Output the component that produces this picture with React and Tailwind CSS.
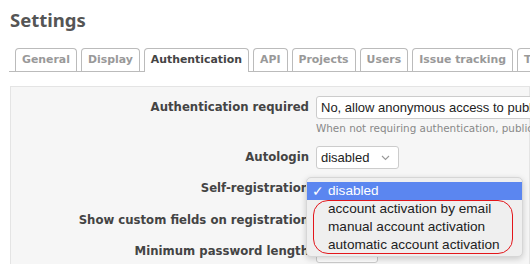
const tabs = ["General", "Display", "Authentication", "API", "Projects", "Users", "Issue tracking", "Time tracking"];

const verdana = { fontFamily: '"DejaVu Sans", Verdana, sans-serif' };

function Row({ label, children, className = "" }) {
  return (
    <div className={"flex items-center h-[23px] " + className}>
      <label className="w-[298px] shrink-0 text-right font-bold text-[11.7px] text-[#444] whitespace-nowrap overflow-hidden">
        {label}
      </label>
      <div className="ml-[7px] flex items-center">{children}</div>
    </div>
  );
}

function Select({ value, width, chevron }) {
  return (
    <div
      className="h-[23px] bg-white border border-[#ccc] rounded-[3px] flex items-center pl-[4px] pr-[8px] text-[13px] text-[#222] whitespace-nowrap"
      style={{ fontFamily: '"Liberation Sans", Arial, sans-serif', width }}
    >
      <span>{value}</span>
      {chevron && (
        <svg className="ml-auto" width="9" height="6" viewBox="0 0 9 6">
          <path d="M1 1l3.5 3.5L8 1" fill="none" stroke="#999" strokeWidth="1.1" />
        </svg>
      )}
    </div>
  );
}

export default function App() {
  return (
    <div className="w-[530px] h-[264px] overflow-hidden bg-white relative" style={verdana}>
      <h2
        className="pl-[10px] pt-[8px] text-[18.5px] font-bold text-[#555] leading-[24px]"
        style={{ fontFamily: '"Noto Sans", "Open Sans", sans-serif' }}
      >
        Settings
      </h2>

      <div className="ml-[9px] mt-[17px] border-b border-[#bbb] flex gap-[4px] pl-[6px] h-[23px] items-end whitespace-nowrap">
        {tabs.map((t) => {
          const active = t === "Authentication";
          return (
            <div
              key={t}
              className={
                "px-[6px] flex items-center shrink-0 border border-b-0 rounded-t-[4px] text-[10.9px] font-bold border-[#bbb] " +
                (active ? "bg-white text-[#444] h-[24px] -mb-px" : "h-[23px] bg-white text-[#999]")
              }
            >
              {t}
            </div>
          );
        })}
      </div>

      <div className="ml-[10px] mt-[14px] bg-[#f6f6f6] border border-[#e4e4e4] pt-[9px] h-[200px]">
        <Row label="Authentication required">
          <Select value="No, allow anonymous access to public projects" width={260} />
        </Row>
        <p className="pl-[305px] mt-[2px] text-[10.4px] leading-[14px] text-[#888] whitespace-nowrap">
          When not requiring authentication, public projects and their contents are openly available
        </p>
        <Row label="Autologin" className="mt-[11px]">
          <Select value="disabled" width={83} chevron />
        </Row>
        <Row label="Self-registration" className="mt-[8px]">
          <Select value="disabled" width={83} chevron />
        </Row>
        <Row label="Show custom fields on registration" className="mt-[9px]">
          <input type="checkbox" className="ml-[2px]" />
        </Row>
        <Row label="Minimum password length" className="mt-[8px]">
          <div
            className="w-[62px] h-[23px] bg-white border border-[#ccc] rounded-[3px] pl-[4px] text-[13px] flex items-center"
            style={{ fontFamily: '"Liberation Sans", Arial, sans-serif' }}
          >
            8
          </div>
        </Row>
      </div>

      {/* native select popup */}
      <div
        className="absolute left-[306px] top-[177px] w-[217px] h-[80px] rounded-[5px] bg-[#efefef] border border-[#d6d6d6] shadow-[0_2px_6px_rgba(0,0,0,0.18)] pt-[4px] text-[13.6px] text-[#222]"
        style={{ fontFamily: '"Liberation Sans", Arial, sans-serif' }}
      >
        <div className="h-[18px] bg-[#5b86f0] text-white flex items-center pl-[5px]">
          <span className="w-[16px] shrink-0 text-[14px]">✓</span>
          <span>disabled</span>
        </div>
        <div className="pl-[21px] leading-[18px]">account activation by email</div>
        <div className="pl-[21px] leading-[18px]">manual account activation</div>
        <div className="pl-[21px] leading-[18px]">automatic account activation</div>
      </div>

      {/* red annotation */}
      <div className="absolute left-[313px] top-[200px] w-[200px] h-[54px] rounded-[15px] border-[1.5px] border-[#e3161b]" />
    </div>
  );
}
